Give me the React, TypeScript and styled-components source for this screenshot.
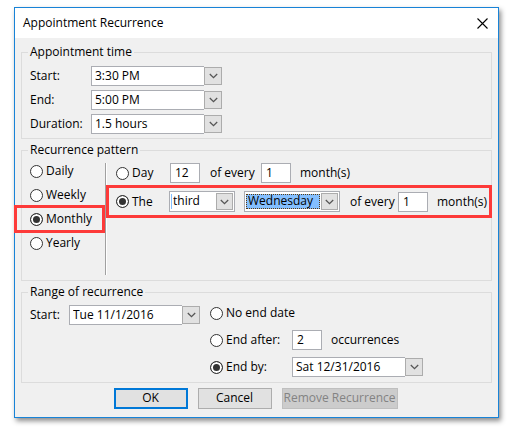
import React, { useId, useState } from "react";
import styled, { createGlobalStyle, css } from "styled-components";

const GlobalStyle = createGlobalStyle`
  *, *::before, *::after { box-sizing: border-box; }
  body {
    margin: 0;
    background: #fff;
    color: #000;
    font: 12px/16px "Open Sans", "Noto Sans", sans-serif;
  }
  input, select, button { font: inherit; color: inherit; margin: 0; }
`;

const Dialog = styled.main`
  margin: 7px 16px 12px 14px;
  border: 1px solid #1883d7;
  background: #f0f0f0;
  box-shadow: 2px 3px 5px rgba(0, 0, 0, 0.45);
`;

const TitleBar = styled.header`
  display: flex;
  align-items: center;
  justify-content: space-between;
  height: 30px;
  padding: 0 10px 0 8px;
  background: #fff;
`;

const Title = styled.h1`
  margin: 0;
  font-size: 12px;
  font-weight: 400;
`;

const CloseButton = styled.button`
  display: flex;
  padding: 0;
  border: 0;
  background: none;
`;

const Body = styled.form`
  display: flex;
  flex-direction: column;
  gap: 3px;
  padding: 6px 6px 8px;
`;

const Group = styled.fieldset<{ $bottom: number }>`
  min-width: 0;
  margin: 0;
  padding: 0 8px ${(p) => p.$bottom}px;
  border: 1px solid #dcdcdc;
`;

const Legend = styled.legend`
  margin-left: -2px;
  padding: 0 2px;
`;

const TimeGrid = styled.div`
  display: grid;
  grid-template-columns: 61px 131px;
  row-gap: 4px;
  align-items: center;
  padding-top: 6px;
`;

const Combo = styled.div`
  display: grid;
  grid-template-columns: 1fr 18px;
  align-items: center;
  height: 20px;
`;

const ListBox = styled.div`
  display: grid;
  grid-template-columns: 1fr 17px;
  align-items: center;
  column-gap: 1px;
  height: 21px;
  padding: 0 1px;
  border: 1px solid #abadb3;
  background: #fff;
`;

const Select = styled.select`
  grid-area: 1 / 1 / 2 / 3;
  position: relative;
  width: 100%;
  height: 20px;
  padding: 0 0 1px 4px;
  border: 0;
  outline: 0;
  appearance: none;
  background: none;
`;

const ListSelect = styled(Select)`
  height: 18px;
  padding: 0 0 1px 2px;
`;

const ComboField = styled.span`
  grid-area: 1 / 1;
  height: 20px;
  border: 1px solid #abadb3;
  border-right-width: 0;
  background: #fff;
`;

const ListField = styled.span<{ $focused: boolean }>`
  grid-area: 1 / 1;
  height: 15px;
  ${(p) =>
    p.$focused
      ? css`
          border: 1px dotted #5a3a10;
          background: #84bfff;
        `
      : css`
          border-left: 1px solid #84bfff;
        `}
`;

const Arrow = styled.span`
  grid-area: 1 / 2;
  display: flex;
  align-items: center;
  justify-content: center;
  height: 18px;
  border: 1px solid #acacac;
  background: #e1e1e1;
`;

const ListArrow = styled(Arrow)`
  height: 17px;
`;

const NumberBox = styled.input`
  width: 30px;
  height: 20px;
  padding: 0 4px 1px;
  border: 1px solid #abadb3;
  border-radius: 0;
  background: #fff;
`;

const RadioLabel = styled.label`
  display: flex;
  align-items: center;
  gap: 3px;
  white-space: nowrap;
`;

const Radio = styled.input.attrs({ type: "radio" })`
  flex: none;
  width: 13px;
  height: 13px;
  border: 1px solid #333;
  border-radius: 50%;
  appearance: none;
  background: #fff;
  &:checked {
    background: #333;
    box-shadow: inset 0 0 0 2px #fff;
  }
`;

const Pattern = styled.div`
  display: grid;
  grid-template-columns: 75px minmax(0, 1fr);
  align-items: start;
`;

const Frequencies = styled.div`
  display: grid;
  grid-auto-rows: 24px;
  padding-top: 1px;
`;

const Marked = styled.div<{ $inset: string }>`
  position: relative;
  display: grid;
  grid-template-columns: minmax(0, 1fr);
  &::after {
    content: "";
    position: absolute;
    inset: ${(p) => p.$inset};
    border: 3px solid #fd3a39;
    pointer-events: none;
  }
`;

const Rules = styled.div`
  display: flex;
  flex-direction: column;
  gap: 8px;
  height: 112px;
  margin-top: 5px;
  padding-left: 10px;
  border-left: 1px solid #a0a0a0;
  box-shadow: inset 1px 0 #fff;
`;

const DayRule = styled.div`
  display: grid;
  grid-template-columns: 54px 40px 51px 39px auto;
  align-items: center;
  white-space: nowrap;
`;

const WeekdayRule = styled.div`
  display: grid;
  grid-template-columns: 53px 66px 9px 96px 10px 48px 39px auto;
  align-items: center;
  white-space: nowrap;
`;

const Wide = styled.div<{ $column: number }>`
  grid-column: ${(p) => p.$column};
`;

const Range = styled.div`
  display: grid;
  grid-template-columns: 180px 1fr;
  align-items: start;
  padding-top: 3px;
`;

const RangeStart = styled.div`
  display: grid;
  grid-template-columns: 39px 131px;
  align-items: center;
  padding-top: 2px;
`;

const Endings = styled.div`
  display: grid;
  gap: 7px;
`;

const Ending = styled.div`
  display: grid;
  grid-template-columns: 82px 131px;
  align-items: center;
  min-height: 20px;
`;

const Occurrences = styled.div`
  display: flex;
  align-items: center;
  gap: 9px;
`;

const Actions = styled.footer`
  display: flex;
  justify-content: center;
  gap: 10px;
  padding: 2px 2px 0 0;
`;

const ActionButton = styled.button<{ $primary?: boolean; $wide?: boolean }>`
  width: ${(p) => (p.$wide ? 116 : 74)}px;
  height: 21px;
  padding: 0 0 1px;
  border: ${(p) => (p.$primary ? "2px solid #0078d7" : "1px solid #adadad")};
  background: #e1e1e1;
  white-space: nowrap;
  &:disabled {
    border-color: #bfbfbf;
    background: #ccc;
    color: #838383;
  }
`;

function Chevron() {
  return (
    <svg width="9" height="6" viewBox="0 0 9 6" aria-hidden="true">
      <path d="M0.8 1 4.5 4.6 8.2 1" fill="none" stroke="#555" strokeWidth="1.3" />
    </svg>
  );
}

type PickerProps = { id?: string; label?: string; options: string[] };

function ComboBox({ id, label, options }: PickerProps) {
  return (
    <Combo>
      <ComboField />
      <Arrow>
        <Chevron />
      </Arrow>
      <Select id={id} aria-label={label}>
        {options.map((o) => (
          <option key={o}>{o}</option>
        ))}
      </Select>
    </Combo>
  );
}

function DropDown({ label, options, focused = false }: PickerProps & { focused?: boolean }) {
  return (
    <ListBox>
      <ListField $focused={focused} />
      <ListArrow>
        <Chevron />
      </ListArrow>
      <ListSelect aria-label={label}>
        {options.map((o) => (
          <option key={o}>{o}</option>
        ))}
      </ListSelect>
    </ListBox>
  );
}

type ChoiceProps = {
  name: string;
  text: string;
  value: string;
  onPick: (text: string) => void;
};

function Choice({ name, text, value, onPick }: ChoiceProps) {
  return (
    <RadioLabel>
      <Radio name={name} checked={value === text} onChange={() => onPick(text)} />
      {text}
    </RadioLabel>
  );
}

const times = [
  { label: "Start:", options: ["3:30 PM", "4:00 PM", "4:30 PM"] },
  { label: "End:", options: ["5:00 PM", "5:30 PM", "6:00 PM"] },
  { label: "Duration:", options: ["1.5 hours", "2 hours", "3 hours"] },
];

const frequencies = ["Daily", "Weekly", "Monthly", "Yearly"];

export default function App() {
  const id = useId();
  const [frequency, setFrequency] = useState("Monthly");
  const [rule, setRule] = useState("The");
  const [ending, setEnding] = useState("End by:");

  return (
    <>
      <GlobalStyle />
      <Dialog role="dialog" aria-labelledby={`${id}-title`}>
        <TitleBar>
          <Title id={`${id}-title`}>Appointment Recurrence</Title>
          <CloseButton type="button" aria-label="Close">
            <svg width="11" height="11" viewBox="0 0 11 11" aria-hidden="true">
              <path d="M0.5 0.5 10.5 10.5M10.5 0.5 0.5 10.5" stroke="#000" strokeWidth="1.1" />
            </svg>
          </CloseButton>
        </TitleBar>

        <Body onSubmit={(e) => e.preventDefault()}>
          <Group $bottom={4}>
            <Legend>Appointment time</Legend>
            <TimeGrid>
              {times.map((t) => (
                <React.Fragment key={t.label}>
                  <label htmlFor={id + t.label}>{t.label}</label>
                  <ComboBox id={id + t.label} options={t.options} />
                </React.Fragment>
              ))}
            </TimeGrid>
          </Group>

          <Group $bottom={5}>
            <Legend>Recurrence pattern</Legend>
            <Pattern>
              <Frequencies>
                {frequencies.map((f) => {
                  const choice = (
                    <Choice key={f} name="frequency" text={f} value={frequency} onPick={setFrequency} />
                  );
                  return f === "Monthly" ? (
                    <Marked key={f} $inset="-2px 0 -2px -16px">
                      {choice}
                    </Marked>
                  ) : (
                    choice
                  );
                })}
              </Frequencies>
              <Rules>
                <DayRule>
                  <Choice name="rule" text="Day" value={rule} onPick={setRule} />
                  <NumberBox aria-label="Day of month" defaultValue="12" />
                  <span>of every</span>
                  <NumberBox aria-label="Months between days" defaultValue="1" />
                  <span>month(s)</span>
                </DayRule>
                <Marked $inset="-6px -9px -6px -10px">
                  <WeekdayRule>
                    <Choice name="rule" text="The" value={rule} onPick={setRule} />
                    <DropDown label="Week" options={["third", "fourth", "last"]} />
                    <Wide $column={4}>
                      <DropDown label="Weekday" options={["Wednesday", "Thursday", "Friday"]} focused />
                    </Wide>
                    <Wide $column={6}>of every</Wide>
                    <NumberBox aria-label="Months between weekdays" defaultValue="1" />
                    <span>month(s)</span>
                  </WeekdayRule>
                </Marked>
              </Rules>
            </Pattern>
          </Group>

          <Group $bottom={5}>
            <Legend>Range of recurrence</Legend>
            <Range>
              <RangeStart>
                <label htmlFor={`${id}-from`}>Start:</label>
                <ComboBox id={`${id}-from`} options={["Tue 11/1/2016"]} />
              </RangeStart>
              <Endings>
                <Ending>
                  <Choice name="ending" text="No end date" value={ending} onPick={setEnding} />
                </Ending>
                <Ending>
                  <Choice name="ending" text="End after:" value={ending} onPick={setEnding} />
                  <Occurrences>
                    <NumberBox id={`${id}-count`} defaultValue="2" />
                    <label htmlFor={`${id}-count`}>occurrences</label>
                  </Occurrences>
                </Ending>
                <Ending>
                  <Choice name="ending" text="End by:" value={ending} onPick={setEnding} />
                  <ComboBox label="End date" options={["Sat 12/31/2016"]} />
                </Ending>
              </Endings>
            </Range>
          </Group>

          <Actions>
            <ActionButton type="submit" $primary>OK</ActionButton>
            <ActionButton type="button">Cancel</ActionButton>
            <ActionButton type="button" $wide disabled>Remove Recurrence</ActionButton>
          </Actions>
        </Body>
      </Dialog>
    </>
  );
}
